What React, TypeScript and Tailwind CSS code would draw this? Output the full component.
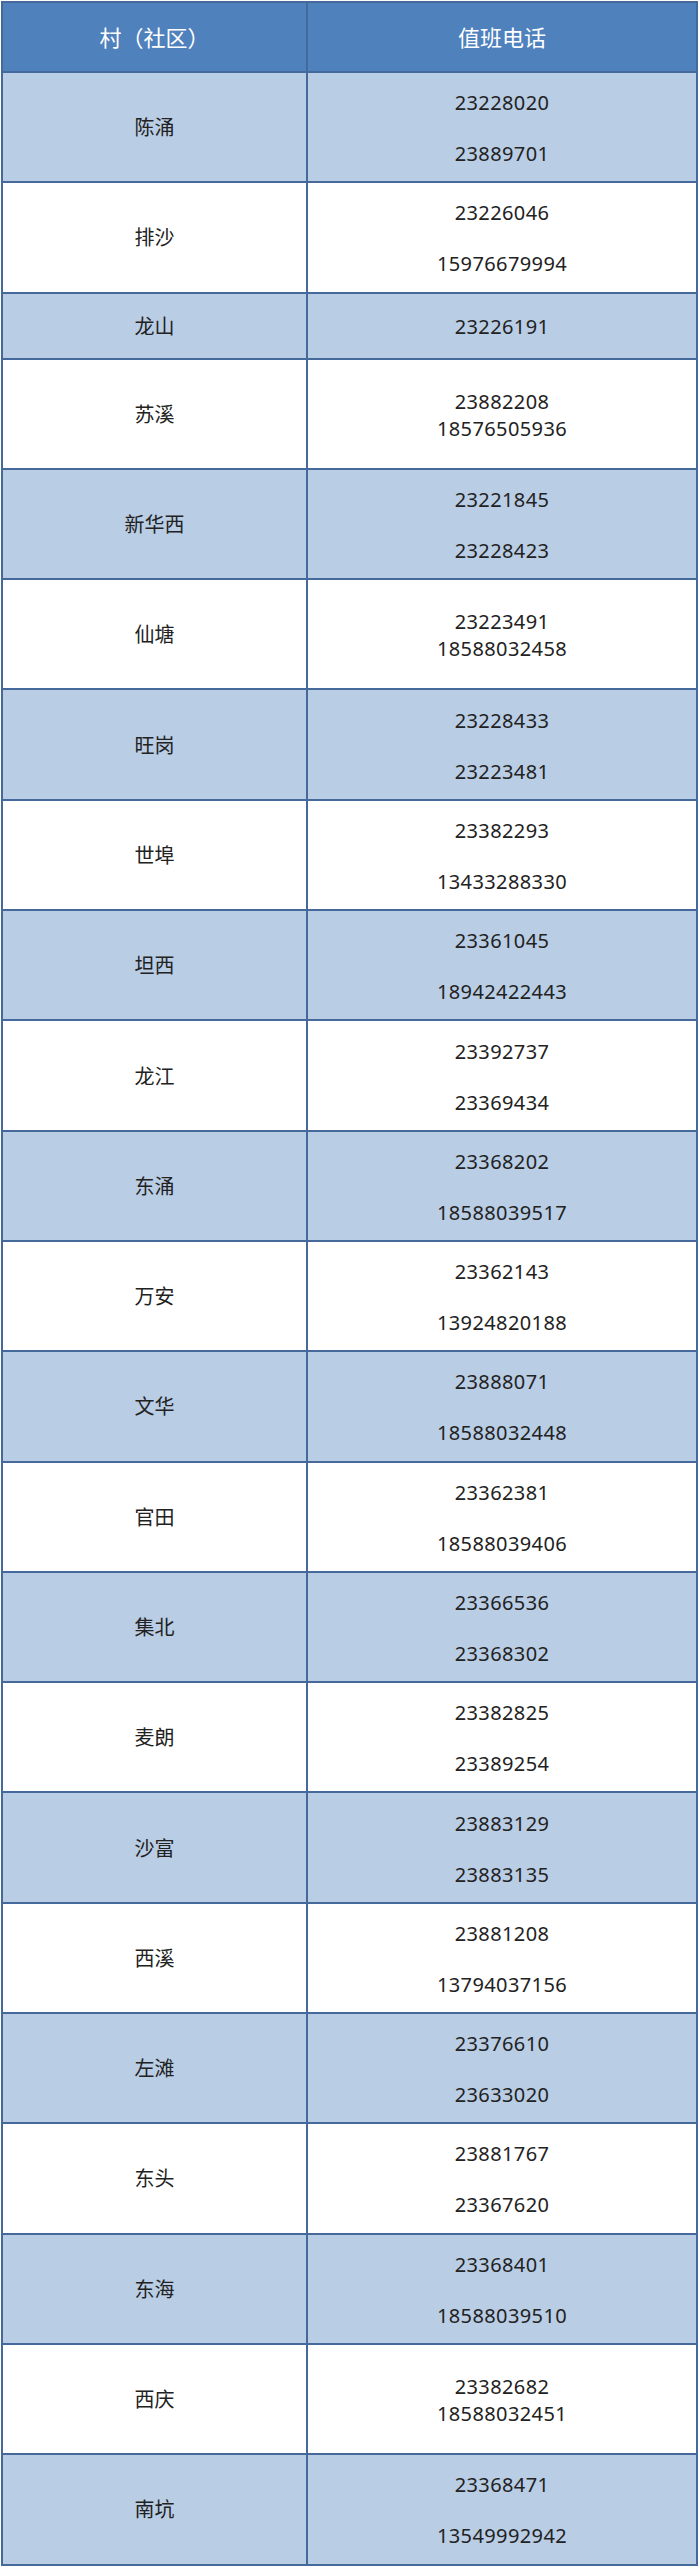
const rows: { name: string; phones: string[]; tight?: boolean }[] = [
  { name: "陈涌", phones: ["23228020", "23889701"] },
  { name: "排沙", phones: ["23226046", "15976679994"] },
  { name: "龙山", phones: ["23226191"] },
  { name: "苏溪", phones: ["23882208", "18576505936"], tight: true },
  { name: "新华西", phones: ["23221845", "23228423"] },
  { name: "仙塘", phones: ["23223491", "18588032458"], tight: true },
  { name: "旺岗", phones: ["23228433", "23223481"] },
  { name: "世埠", phones: ["23382293", "13433288330"] },
  { name: "坦西", phones: ["23361045", "18942422443"] },
  { name: "龙江", phones: ["23392737", "23369434"] },
  { name: "东涌", phones: ["23368202", "18588039517"] },
  { name: "万安", phones: ["23362143", "13924820188"] },
  { name: "文华", phones: ["23888071", "18588032448"] },
  { name: "官田", phones: ["23362381", "18588039406"] },
  { name: "集北", phones: ["23366536", "23368302"] },
  { name: "麦朗", phones: ["23382825", "23389254"] },
  { name: "沙富", phones: ["23883129", "23883135"] },
  { name: "西溪", phones: ["23881208", "13794037156"] },
  { name: "左滩", phones: ["23376610", "23633020"] },
  { name: "东头", phones: ["23881767", "23367620"] },
  { name: "东海", phones: ["23368401", "18588039510"] },
  { name: "西庆", phones: ["23382682", "18588032451"], tight: true },
  { name: "南坑", phones: ["23368471", "13549992942"] },
];

export default function App() {
  return (
    <div className="w-[700px] min-h-[2566px] bg-white pt-px pl-px font-['Noto_Sans','Noto_Sans_CJK_SC',sans-serif]">
      <div className="w-[697px] border-2 border-[#46699b]">
        {/* header */}
        <div className="grid grid-cols-[305px_1fr] h-[68px] bg-[#4f81bd] text-white text-[22px]">
          <div className="flex items-center justify-center border-r-2 border-[#46699b]">
            村（社区）
          </div>
          <div className="flex items-center justify-center">值班电话</div>
        </div>

        {rows.map((r, i) => (
          <div
            key={r.name}
            className={`grid grid-cols-[305px_1fr] border-t-2 border-[#46699b] text-[#222] ${
              r.phones.length === 1 ? "h-[66px]" : "h-[110.3px]"
            } ${i % 2 === 0 ? "bg-[#b9cde5]" : "bg-white"}`}
          >
            <div className="flex items-center justify-center border-r-2 border-[#46699b] text-[20px] pt-[2px]">
              {r.name}
            </div>
            <div
              className={`flex flex-col items-center justify-center text-[20px] tracking-[0.4px] leading-[27px] pt-[2px] ${
                r.tight ? "gap-0" : "gap-[24px]"
              }`}
            >
              {r.phones.map((p) => (
                <div key={p}>{p}</div>
              ))}
            </div>
          </div>
        ))}
      </div>
    </div>
  );
}
